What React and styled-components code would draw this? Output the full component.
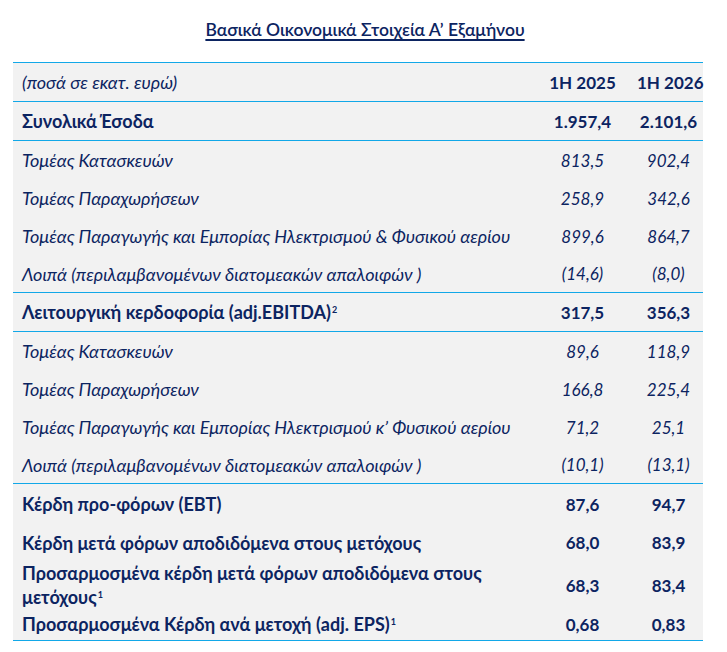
import React from "react";
import styled, { createGlobalStyle } from "styled-components";

const GlobalStyle = createGlobalStyle`
    body {
        margin: 0;
        background: #ffffff;
        font-family: "Lato", "Liberation Sans", sans-serif;
        color: #0c2461;
    }
`;

const groups = [
    {
        head: { label: "Συνολικά Έσοδα", a: "1.957,4", b: "2.101,6" },
        rows: [
            { label: "Τομέας Κατασκευών", a: "813,5", b: "902,4" },
            { label: "Τομέας Παραχωρήσεων", a: "258,9", b: "342,6" },
            { label: "Τομέας Παραγωγής και Εμπορίας Ηλεκτρισμού & Φυσικού αερίου", a: "899,6", b: "864,7" },
            { label: "Λοιπά (περιλαμβανομένων διατομεακών απαλοιφών )", a: "(14,6)", b: "(8,0)" },
        ],
    },
    {
        head: { label: "Λειτουργική κερδοφορία (adj.EBITDA)", sup: "2", a: "317,5", b: "356,3" },
        rows: [
            { label: "Τομέας Κατασκευών", a: "89,6", b: "118,9" },
            { label: "Τομέας Παραχωρήσεων", a: "166,8", b: "225,4" },
            { label: "Τομέας Παραγωγής και Εμπορίας Ηλεκτρισμού κ’ Φυσικού αερίου", a: "71,2", b: "25,1" },
            { label: "Λοιπά (περιλαμβανομένων διατομεακών απαλοιφών )", a: "(10,1)", b: "(13,1)" },
        ],
    },
];

const subHeights = [38, 38, 38, 37];

const totals = [
    { label: "Κέρδη προ-φόρων (EBT)", a: "87,6", b: "94,7", h: 40 },
    { label: "Κέρδη μετά φόρων αποδιδόμενα στους μετόχους", a: "68,0", b: "83,9", h: 37 },
    { label: "Προσαρμοσμένα κέρδη μετά φόρων αποδιδόμενα στους μετόχους", sup: "1", a: "68,3", b: "83,4", h: 47 },
    { label: "Προσαρμοσμένα Κέρδη ανά μετοχή (adj. EPS)", sup: "1", a: "0,68", b: "0,83", h: 32 },
];

function Row({ label, sup, a, b, bold, italic, h, wrap }) {
    return (
        <RowWrap $h={h}>
            <Label $bold={bold} $italic={italic} $wrap={wrap}>
                {label}
                {sup && <Sup>{sup}</Sup>}
            </Label>
            <Value $bold={bold} $italic={italic}>{a}</Value>
            <Value $bold={bold} $italic={italic}>{b}</Value>
        </RowWrap>
    );
}

export default function App() {
    return (
        <Page>
            <GlobalStyle />
            <Title>Βασικά Οικονομικά Στοιχεία Α’ Εξαμήνου</Title>
            <Table>
                <Section>
                    <RowWrap $h={38}>
                        <Label $italic>(ποσά σε εκατ. ευρώ)</Label>
                        <Value $bold>1H 2025</Value>
                        <Value $bold>1H 2026</Value>
                    </RowWrap>
                </Section>
                {groups.map((g) => (
                    <React.Fragment key={g.head.label}>
                        <Section>
                            <Row {...g.head} bold h={38} />
                        </Section>
                        <Section>
                            {g.rows.map((r, i) => (
                                <Row key={r.label} {...r} italic h={subHeights[i]} />
                            ))}
                        </Section>
                    </React.Fragment>
                ))}
                <Section>
                    {totals.map((r) => (
                        <Row key={r.label} {...r} bold wrap />
                    ))}
                </Section>
            </Table>
        </Page>
    );
}

const Page = styled.div`
    width: 727px;
    height: 652px;
    box-sizing: border-box;
    padding-top: 19px;
`;

const Title = styled.h1`
    margin: 0 0 21px 0;
    text-align: center;
    font-size: 17.5px;
    font-weight: 600;
    line-height: 22px;
    color: #0c2461;
    text-decoration: underline;
    text-decoration-thickness: 2px;
    text-underline-offset: 3px;
    padding-left: 3px;
`;

const Table = styled.div`
    margin-left: 13px;
    width: 690px;
    background: #f2f2f2;
    border-top: 1px solid #12a8e8;
`;

const Section = styled.div`
    border-bottom: 1px solid #12a8e8;
`;

const RowWrap = styled.div`
    display: grid;
    grid-template-columns: 1fr 106px 66px;
    align-items: center;
    height: ${(p) => p.$h}px;
`;

const Label = styled.div`
    padding-left: 9px;
    font-size: 18px;
    line-height: 24px;
    font-weight: ${(p) => (p.$bold ? 700 : 400)};
    font-style: ${(p) => (p.$italic ? "italic" : "normal")};
    max-width: ${(p) => (p.$wrap ? "480px" : "none")};
    white-space: ${(p) => (p.$wrap ? "normal" : "nowrap")};
`;

const Value = styled.div`
    text-align: center;
    font-size: 17px;
    padding-right: 3px;
    font-weight: ${(p) => (p.$bold ? 700 : 400)};
    font-style: ${(p) => (p.$italic ? "italic" : "normal")};
    white-space: nowrap;
`;

const Sup = styled.sup`
    font-size: 9px;
    vertical-align: 6px;
    line-height: 0;
    margin-left: 1px;
`;
